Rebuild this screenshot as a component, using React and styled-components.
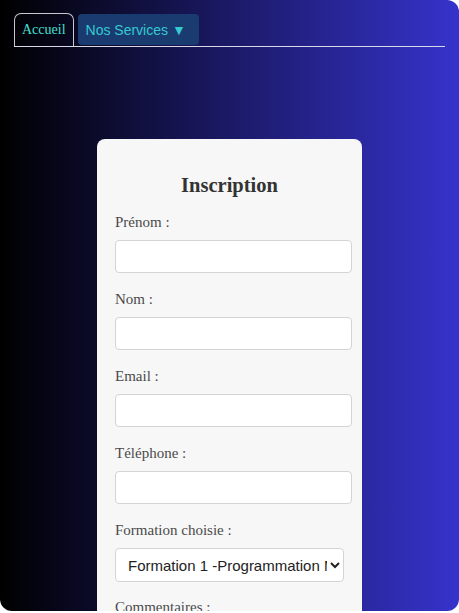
import styled, { createGlobalStyle } from "styled-components";

const GlobalStyle = createGlobalStyle`
  html, body {
    margin: 0;
    padding: 0;
    background: #ffffff;
  }
`;

export default function App() {
  return (
    <>
      <GlobalStyle />
      <Page>
        <Nav>
          <Tab href="#">Accueil</Tab>
          <DropButton type="button">Nos Services ▼</DropButton>
        </Nav>
        <Card>
          <Title>Inscription</Title>
          <Label>Prénom :</Label>
          <Input type="text" />
          <Label>Nom :</Label>
          <Input type="text" />
          <Label>Email :</Label>
          <Input type="email" />
          <Label>Téléphone :</Label>
          <Input type="tel" />
          <Label>Formation choisie :</Label>
          <Select defaultValue="f1">
            <option value="f1">Formation 1 -Programmation MCU</option>
            <option value="f2">Formation 2</option>
          </Select>
          <Label>Commentaires :</Label>
        </Card>
      </Page>
    </>
  );
}

const Page = styled.div`
  height: 611px;
  overflow: hidden;
  border-radius: 0 12px 12px 12px;
  background: linear-gradient(to right, #000000 0%, #3633cc 100%);
  box-sizing: border-box;
`;

const Nav = styled.nav`
  display: flex;
  align-items: flex-end;
  margin: 0 14px;
  padding-top: 13px;
  border-bottom: 1px solid #d8d8e8;
`;

const Tab = styled.a`
  height: 33px;
  box-sizing: border-box;
  display: flex;
  align-items: center;
  padding: 0 7px;
  border: 1px solid #c8c8d0;
  border-bottom: none;
  border-radius: 7px 7px 0 0;
  font-family: "Liberation Serif", serif;
  font-size: 14px;
  color: #40e0d0;
  text-decoration: none;
`;

const DropButton = styled.button`
  height: 31px;
  margin: 0 0 1px 4px;
  padding: 0 13px 0 8px;
  border: none;
  border-radius: 4px;
  background: #1a3b70;
  color: #35c9d2;
  font-family: "Liberation Sans", Arial, sans-serif;
  font-size: 14px;
`;

const Card = styled.form`
  width: 265px;
  box-sizing: border-box;
  margin: 92px auto 0;
  padding: 22px 18px 20px;
  background: #f7f7f7;
  border-radius: 8px;
`;

const Title = styled.h2`
  margin: 12px 0 16px;
  text-align: center;
  font-family: "Liberation Serif", serif;
  font-size: 20.5px;
  line-height: 24px;
  font-weight: bold;
  color: #333333;
`;

const Label = styled.label`
  display: block;
  font-family: "Liberation Serif", serif;
  font-size: 15px;
  line-height: 18px;
  color: #4a4a4a;
  margin-bottom: 9px;
`;

const Input = styled.input`
  display: block;
  width: 100%;
  height: 25px;
  padding: 3px;
  box-sizing: content-box;
  margin: 0 0 17px;
  border: 1px solid #d4d4d4;
  border-radius: 4px;
  background: #ffffff;
`;

const Select = styled.select`
  display: block;
  width: 100%;
  height: 34px;
  box-sizing: border-box;
  margin: 0 0 16px;
  padding: 0 0 0 8px;
  border: 1px solid #d4d4d4;
  border-radius: 4px;
  background: #ffffff;
  font-family: "Liberation Sans", Arial, sans-serif;
  font-size: 15px;
  color: #222222;
`;
